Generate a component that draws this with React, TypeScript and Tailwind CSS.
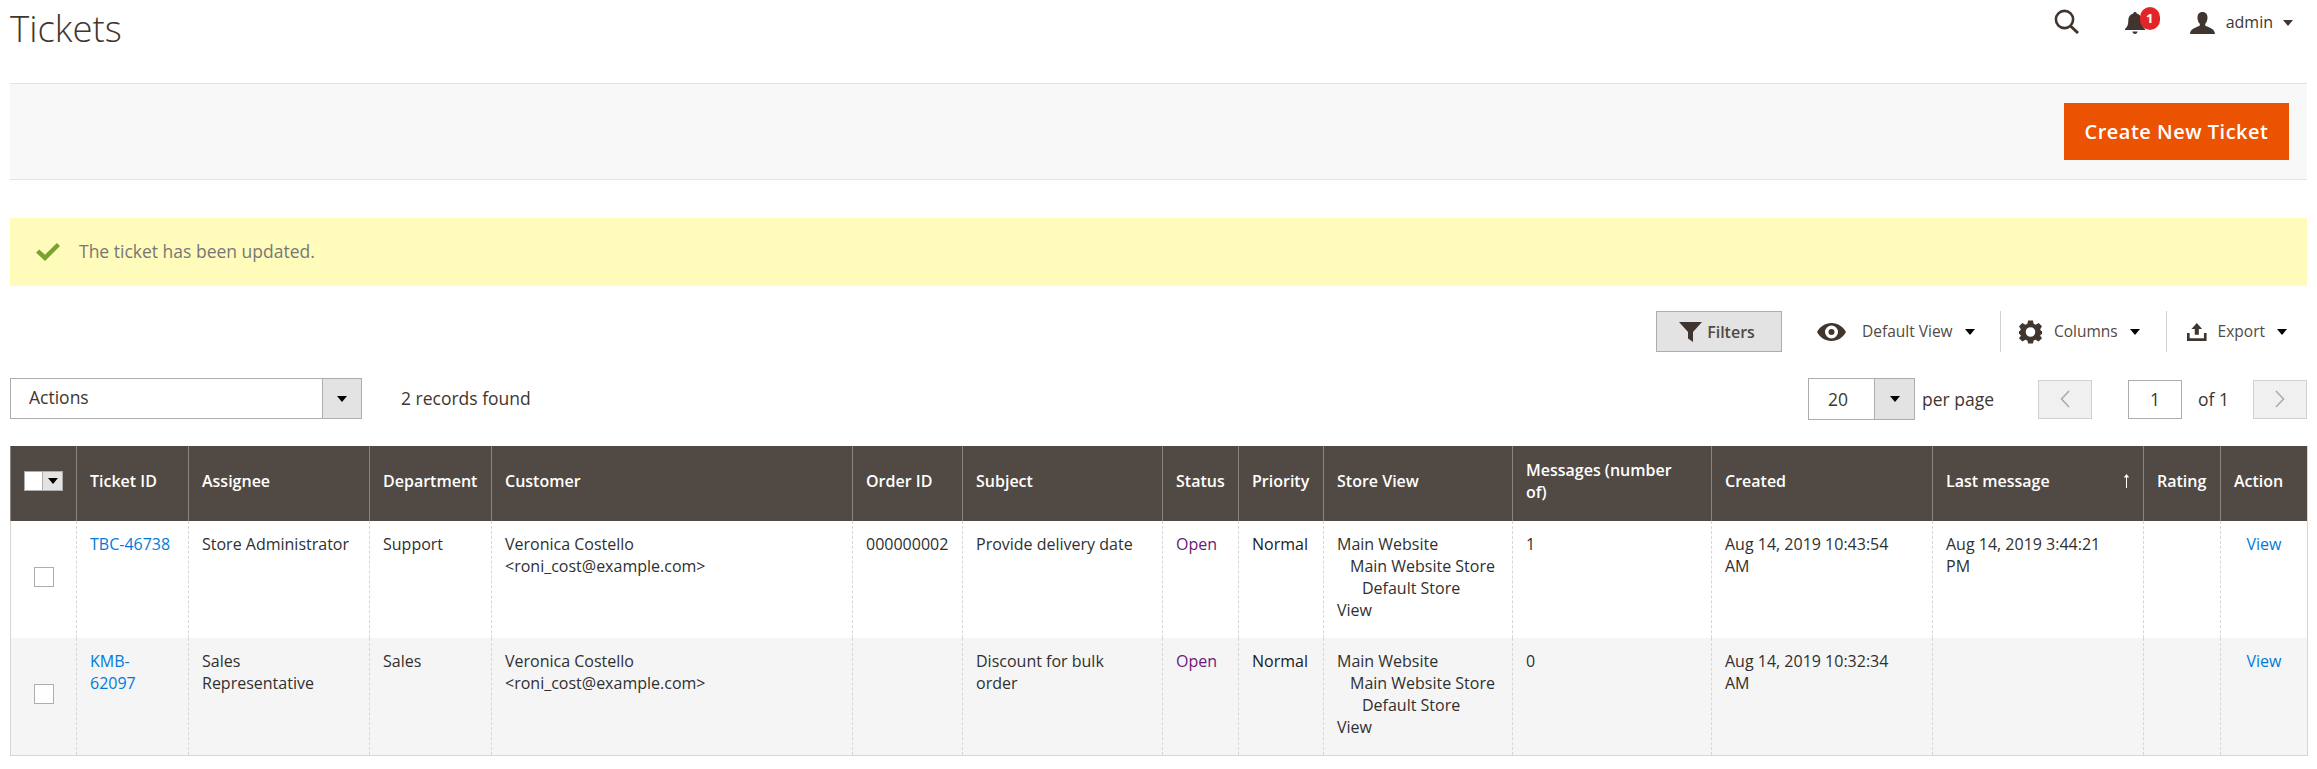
const Caret = ({ className = 'border-t-[#41362f]' }: { className?: string }) => (
  <span className={`inline-block h-0 w-0 border-x-[5px] border-t-[6px] border-x-transparent ${className}`} />
)

const SearchIcon = () => (
  <svg width="26" height="25" viewBox="0 0 26 25" fill="none" stroke="#41362f">
    <circle cx="10.5" cy="10.5" r="8.6" strokeWidth="2.6" />
    <path d="M16.5 17 L24 24" strokeWidth="3" />
  </svg>
)

const BellIcon = () => (
  <svg width="22" height="25" viewBox="0 0 22 25" fill="#41362f">
    <path d="M11 2c1 0 1.7.6 1.7 1.5 3.4.8 5 3.4 5 7 0 4 .8 6.300 3.300 8.500v1H1v-1c2.500-2.200 3.300-4.500 3.300-8.500 0-3.600 1.600-6.200 5-7C9.300 2.600 10 2 11 2z" />
    <path d="M8.500 21.500h5c0 1.500-1 2.500-2.500 2.500s-2.500-1-2.500-2.500z" />
  </svg>
)

const UserIcon = () => (
  <svg width="25" height="22" viewBox="0 0 25 22" fill="#41362f">
    <path d="M12.500 0c3.400 0 5 2.400 5 5.500 0 2.600-.9 5-2.300 6.300v1.800c1.200 1.500 9.800 2.400 9.800 8.400H0c0-6 8.600-6.900 9.800-8.400v-1.800C8.400 10.500 7.500 8.100 7.500 5.500 7.500 2.400 9.100 0 12.500 0z" />
  </svg>
)

const CheckIcon = () => (
  <svg width="24" height="18" viewBox="0 0 24 18" fill="#79a22e">
    <path d="M0 9.500 3.300 6.500 9 11.800 20.800 0 24 3 9 18z" />
  </svg>
)

const FunnelIcon = () => (
  <svg width="23" height="20" viewBox="0 0 23 20" fill="#41362f">
    <path d="M0 0h23L14 10v10l-5-3.500V10z" />
  </svg>
)

const EyeIcon = () => (
  <svg width="29" height="18" viewBox="0 0 29 18">
    <path fillRule="evenodd" fill="#41362f" d="M14.500 0C21 0 26.500 4 29 9c-2.500 5-8 9-14.500 9S2.500 14 0 9C2.500 4 8 0 14.500 0zm0 2.500a6.500 6.500 0 1 0 0 13 6.500 6.500 0 0 0 0-13zm0 3.500a3 3 0 1 1 0 6 3 3 0 0 1 0-6z" />
  </svg>
)

const GearIcon = () => (
  <svg width="23" height="24" viewBox="0 0 24 24" fill="#41362f">
    <path fillRule="evenodd" d="M9.500 0h5l.8 3.500 2 .9L20.500 2.500 24 6l-1.900 3 .9 2H24v3l-1 .3-.9 1.700L24 18.500 20.500 22l-3.200-2-2 .9-.8 3.100h-5l-.8-3.100-2-.9-3.200 2L0 18.500 1.900 16l-.9-1.700L0 14v-3h1l.9-2L0 6l3.500-3.500L6.700 4.400l2-.9zM12 7a5 5 0 1 0 0 10 5 5 0 0 0 0-10z" />
  </svg>
)

const ExportIcon = () => (
  <svg width="22" height="20" viewBox="0 0 22 20" fill="#41362f">
    <path d="M11 0l6 6.500h-3.700V13H8.700V6.500H5z" />
    <path d="M0 11h3v6h16v-6h3v9H0z" />
  </svg>
)

const ChevronLeft = () => (
  <svg width="10" height="18" viewBox="0 0 10 18" fill="none" stroke="#a9a9a9" strokeWidth="1.500">
    <path d="M9 1 1.500 9 9 17" />
  </svg>
)

const ChevronRight = () => (
  <svg width="10" height="18" viewBox="0 0 10 18" fill="none" stroke="#a9a9a9" strokeWidth="1.500">
    <path d="M1 1l7.500 8L1 17" />
  </svg>
)

const SortArrow = () => (
  <svg width="7" height="14" viewBox="0 0 7 14" fill="#ffffff">
    <path d="M3 14V3.500H.8L3.500 0l2.700 3.500H4V14z" />
  </svg>
)

const thClass =
  'whitespace-pre-line border-l border-[#8a837f] bg-[#514943] px-[13px] pt-0 pb-[6px] text-left align-middle text-[16px] font-semibold leading-[22px] text-white'
const tdClass =
  'h-[117px] whitespace-pre-line border-l border-dashed border-[#d6d6d6] px-[13px] pt-[12px] pb-0 align-top text-[16px] leading-[22px] text-[#303030]'

const columns = [
  { name: '', width: 'w-[66px]' },
  { name: 'Ticket ID', width: 'w-[112px]' },
  { name: 'Assignee', width: 'w-[181px]' },
  { name: 'Department', width: 'w-[122px]' },
  { name: 'Customer', width: 'w-[361px]' },
  { name: 'Order ID', width: 'w-[110px]' },
  { name: 'Subject', width: 'w-[200px]' },
  { name: 'Status', width: 'w-[76px]' },
  { name: 'Priority', width: 'w-[85px]' },
  { name: 'Store View', width: 'w-[189px]' },
  { name: 'Messages (number\nof)', width: 'w-[199px]' },
  { name: 'Created', width: 'w-[221px]' },
  { name: 'Last message', width: 'w-[211px]' },
  { name: 'Rating', width: 'w-[77px]' },
  { name: 'Action', width: 'w-[87px]' },
]

const tickets = [
  {
    id: 'TBC-46738',
    assignee: 'Store Administrator',
    department: 'Support',
    order: '000000002',
    subject: 'Provide delivery date',
    messages: '1',
    created: 'Aug 14, 2019 10:43:54\nAM',
    last: 'Aug 14, 2019 3:44:21\nPM',
    rowClass: 'bg-white',
  },
  {
    id: 'KMB-62097',
    assignee: 'Sales Representative',
    department: 'Sales',
    order: '',
    subject: 'Discount for bulk order',
    messages: '0',
    created: 'Aug 14, 2019 10:32:34\nAM',
    last: '',
    rowClass: 'bg-[#f5f5f5]',
  },
]

export default function App() {
  return (
    <div className="min-h-[769px] bg-white px-[10px] font-['Open_Sans',sans-serif] text-[#41362f]">
      {/* Page header */}
      <header className="flex h-[83px] items-start justify-between">
        <h1 className="mt-[5px] text-[36.5px] font-light leading-[46px] text-[#41362f]">Tickets</h1>
        <div className="mt-[8px] mr-[14px] flex items-center">
          <SearchIcon />
          <div className="relative ml-[44px] mt-[2px] w-[37px]">
            <BellIcon />
            <span className="absolute left-[16px] top-[-3px] flex h-[23px] w-[20px] items-center justify-center rounded-full bg-[#e22626] text-[13px] font-bold text-white">
              1
            </span>
          </div>
          <div className="ml-[29px] mt-[2px]">
            <UserIcon />
          </div>
          <span className="ml-[11px] mt-[1px] text-[16px] text-[#41362f]">admin</span>
          <span className="ml-[10px] mt-[2px] flex">
            <Caret />
          </span>
        </div>
      </header>

      {/* Page actions */}
      <div className="flex h-[97px] items-start justify-end border-y border-[#e3e3e3] bg-[#f8f8f8] pr-[18px] pt-[19px]">
        <button className="h-[57px] w-[225px] bg-[#eb5202] text-[20px] font-semibold tracking-[0.025em] text-white">
          Create New Ticket
        </button>
      </div>

      {/* Message */}
      <div className="mt-[38px] flex h-[68px] items-center bg-[#fffbbb] pl-[26px]">
        <CheckIcon />
        <span className="ml-[19px] mt-[-2px] text-[17.5px] text-[#777777]">The ticket has been updated.</span>
      </div>

      {/* Grid toolbar */}
      <div className="mt-[25px] flex h-[41px] items-center justify-end pr-[20px] text-[15.5px] text-[#514943]">
        <button className="flex h-[41px] w-[126px] items-center justify-center gap-[5px] border border-[#adadad] bg-[#e3e3e3] pr-[4px] text-[16px] font-semibold text-[#514943]">
          <FunnelIcon />
          Filters
        </button>
        <div className="ml-[35px] flex w-[183px] items-center">
          <EyeIcon />
          <span className="ml-[16px]">Default View</span>
          <span className="ml-[12px] flex"><Caret className="border-t-[#000000]" /></span>
        </div>
        <div className="flex h-[41px] w-[166px] items-center border-l border-[#d1d1d1] pl-[18px]">
          <GearIcon />
          <span className="ml-[12px]">Columns</span>
          <span className="ml-[12px] flex"><Caret className="border-t-[#000000]" /></span>
        </div>
        <div className="flex h-[41px] w-[121px] items-center border-l border-[#d1d1d1] pl-[20px]">
          <ExportIcon />
          <span className="ml-[11px]">Export</span>
          <span className="ml-[12px] flex"><Caret className="border-t-[#000000]" /></span>
        </div>
      </div>

      <div className="mt-[26px] flex h-[42px] items-start justify-between text-[17.5px] text-[#41362f]">
        <div className="flex items-center">
          <div className="flex h-[41px] w-[352px] border border-[#adadad]">
            <span className="flex-1 pl-[18px] leading-[37px]">Actions</span>
            <span className="flex w-[39px] items-center justify-center border-l border-[#adadad] bg-[#e3e3e3]">
              <Caret className="border-t-[#000000]" />
            </span>
          </div>
          <span className="ml-[39px]">2 records found</span>
        </div>
        <div className="flex items-center">
          <div className="flex h-[42px] w-[107px] border border-[#adadad]">
            <span className="flex-1 pl-[19px] leading-[40px]">20</span>
            <span className="flex w-[40px] items-center justify-center border-l border-[#adadad] bg-[#e3e3e3]">
              <Caret className="border-t-[#000000]" />
            </span>
          </div>
          <span className="ml-[7px] w-[116px]">per page</span>
          <span className="flex h-[39px] w-[54px] items-center justify-center border border-[#d1d1d1] bg-[#f0f0f0]">
            <ChevronLeft />
          </span>
          <span className="ml-[36px] flex h-[39px] w-[54px] items-center justify-center border border-[#adadad]">
            1
          </span>
          <span className="ml-[16px] w-[55px]">of 1</span>
          <span className="flex h-[39px] w-[54px] items-center justify-center border border-[#d1d1d1] bg-[#f0f0f0]">
            <ChevronRight />
          </span>
        </div>
      </div>

      {/* Tickets grid */}
      <table className="mt-[26px] w-[2297px] table-fixed border-separate border-spacing-0 border-b border-r border-[#d6d6d6]">
        <colgroup>
          {columns.map((column) => (
            <col key={column.name} className={column.width} />
          ))}
        </colgroup>
        <thead>
          <tr className="h-[75px]">
            {columns.map((column, index) => (
              <th key={column.name} className={thClass}>
                {index === 0 && (
                  <span className="flex h-[20px] w-[39px] border border-[#adadad] bg-white">
                    <span className="flex-1" />
                    <span className="flex w-[20px] items-center justify-center border-l border-[#adadad] bg-[#e3e3e3]">
                      <Caret className="border-t-[#000000]" />
                    </span>
                  </span>
                )}
                {column.name === 'Last message' ? (
                  <span className="flex items-center justify-between pr-0">
                    {column.name}
                    <SortArrow />
                  </span>
                ) : (
                  column.name
                )}
              </th>
            ))}
          </tr>
        </thead>
        <tbody>
          {tickets.map((ticket) => (
            <tr key={ticket.id} className={ticket.rowClass}>
              <td className={`${tdClass} pl-[23px] !pt-[46px] !border-solid`}>
                <span className="block h-[20px] w-[20px] border border-[#adadad] bg-white" />
              </td>
              <td className={tdClass}>
                <a className="text-[#007bdb]">{ticket.id}</a>
              </td>
              <td className={tdClass}>{ticket.assignee}</td>
              <td className={tdClass}>{ticket.department}</td>
              <td className={tdClass}>
                Veronica Costello
                <br />
                {'<roni_cost@example.com>'}
              </td>
              <td className={tdClass}>{ticket.order}</td>
              <td className={tdClass}>{ticket.subject}</td>
              <td className={tdClass}>
                <span className="text-[#6b1a7a]">Open</span>
              </td>
              <td className={tdClass}>
                <span className="text-[#1a1a1a]">Normal</span>
              </td>
              <td className={tdClass}>
                <div>Main Website</div>
                <div className="pl-[13px]">Main Website Store</div>
                <div className="pl-[25px]">Default Store</div>
                <div>View</div>
              </td>
              <td className={tdClass}>{ticket.messages}</td>
              <td className={tdClass}>{ticket.created}</td>
              <td className={tdClass}>{ticket.last}</td>
              <td className={tdClass} />
              <td className={`${tdClass} text-center`}>
                <a className="text-[#007bdb]">View</a>
              </td>
            </tr>
          ))}
        </tbody>
      </table>
    </div>
  )
}
